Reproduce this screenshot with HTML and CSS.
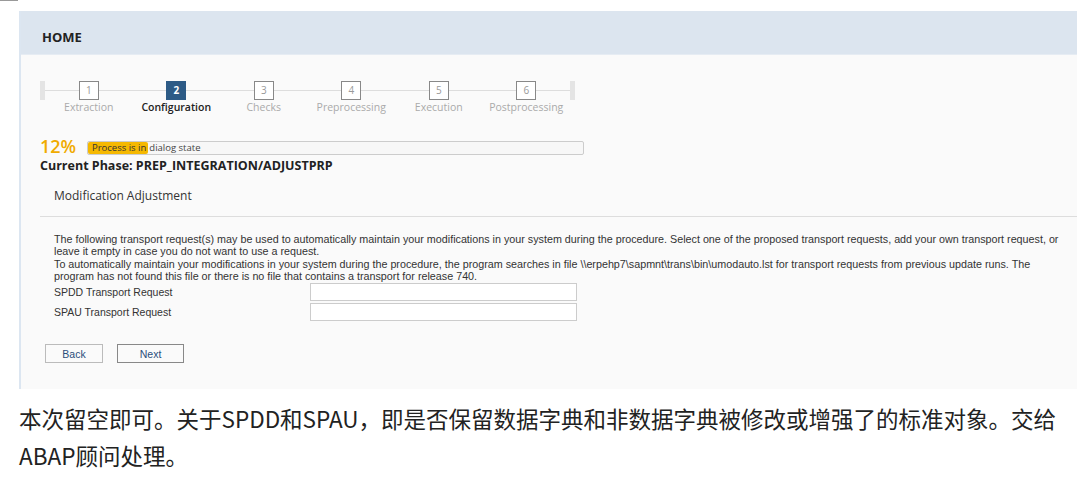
FILE: index.html
```html
<!DOCTYPE html>
<html lang="zh">
<head>
    <meta charset="UTF-8">
    <meta name="viewport" content="width=device-width, initial-scale=1.0">
    <title>SUM - Configuration</title>
    <link rel="stylesheet" href="styles.css">
</head>
<body>

    <div class="topmark"></div>

    <div class="panel">
        <div class="header">HOME</div>

        <div class="content">
            <div class="stepper">
                <div class="cap"></div>
                <div class="step"><span class="box">1</span><span class="label">Extraction</span></div>
                <div class="step current"><span class="box">2</span><span class="label">Configuration</span></div>
                <div class="step"><span class="box">3</span><span class="label">Checks</span></div>
                <div class="step"><span class="box">4</span><span class="label">Preprocessing</span></div>
                <div class="step"><span class="box">5</span><span class="label">Execution</span></div>
                <div class="step"><span class="box">6</span><span class="label">Postprocessing</span></div>
                <div class="cap"></div>
            </div>

            <div class="progress-row">
                <span class="percent">12%</span>
                <div class="progress">
                    <span class="fill">Process is in</span><span class="rest">dialog state</span>
                </div>
            </div>
            <div class="phase">Current Phase: PREP_INTEGRATION/ADJUSTPRP</div>

            <div class="section-title">Modification Adjustment</div>
            <div class="divider"></div>

            <div class="section">
                <p class="info">The following transport request(s) may be used to automatically maintain your modifications in your system during the procedure. Select one of the proposed transport requests, add your own transport request, or leave it empty in case you do not want to use a request.<br>To automatically maintain your modifications in your system during the procedure, the program searches in file \\erpehp7\sapmnt\trans\bin\umodauto.lst for transport requests from previous update runs. The program has not found this file or there is no file that contains a transport for release 740.</p>
                <div class="field">
                    <label>SPDD Transport Request</label>
                    <input type="text">
                </div>
                <div class="field">
                    <label>SPAU Transport Request</label>
                    <input type="text">
                </div>
            </div>

            <div class="buttons">
                <button class="btn">Back</button>
                <button class="btn next">Next</button>
            </div>
        </div>
    </div>

    <p class="note">本次留空即可。关于SPDD和SPAU，即是否保留数据字典和非数据字典被修改或增强了的标准对象。交给ABAP顾问处理。</p>

</body>
</html>
```

FILE: styles.css
```css
body {
    margin: 0;
    padding: 0;
    background: white;
    font-family: "Liberation Sans", Arial, sans-serif;
    color: #333;
}
.topmark {
    width: 18px;
    height: 1px;
    background: #999;
}
.panel {
    margin: 10px 0 0 19px;
    width: 1056px;
    border-left: 2px solid #dce6f1;
    background: #fafafa;
    height: 378px;
}
.header {
    height: 25px;
    padding: 18px 0 0 21px;
    line-height: 16px;
    background: #dce5ef;
    font-family: "Open Sans", sans-serif;
    font-weight: bold;
    font-size: 13px;
    color: #222;
    border-bottom: 1px solid #e6ecf3;
}
.content {
    padding: 26px 0 0 19px;
}
.stepper {
    display: flex;
    width: 537px;
    position: relative;
}
.stepper::before {
    content: "";
    position: absolute;
    left: 4px;
    right: 4px;
    top: 9px;
    height: 1px;
    background: #ddd;
}
.cap {
    width: 5px;
    height: 19px;
    background: #e4e4e4;
    position: relative;
}
.step {
    width: 87.5px;
    display: flex;
    flex-direction: column;
    align-items: center;
    position: relative;
}
.box {
    width: 18px;
    height: 17px;
    border: 1px solid #888;
    background: white;
    font-family: "Open Sans", sans-serif;
    font-size: 10px;
    line-height: 17px;
    text-align: center;
    color: #999;
}
.label {
    font-family: "Open Sans", sans-serif;
    font-size: 10.5px;
    color: #aaa;
    line-height: 14px;
    white-space: nowrap;
}
.current .box {
    background: #2d5b86;
    border-color: #2d5b86;
    color: white;
    font-weight: bold;
}
.current .label {
    color: #222;
    font-weight: 600;
}
.progress-row {
    display: flex;
    align-items: center;
    margin-top: 22px;
    height: 20px;
}
.percent {
    font-family: "Open Sans", sans-serif;
    font-size: 18px;
    font-weight: 600;
    color: #f0ab00;
    width: 47px;
}
.progress {
    width: 495px;
    height: 12px;
    border: 1px solid #ccc;
    border-radius: 2px;
    background: #f7f7f7;
    display: flex;
    align-items: center;
    font-family: "Open Sans", sans-serif;
    font-size: 9.5px;
    line-height: 12px;
    margin-top: 3px;
}
.fill {
    background: #f5b800;
    border-radius: 2px;
    padding: 0 2px 0 4px;
    color: #333;
    white-space: nowrap;
    height: 12px;
    margin-right: 1px;
}
.rest {
    color: #444;
}
.phase {
    font-family: "Open Sans", sans-serif;
    font-weight: bold;
    font-size: 12.5px;
    color: #222;
    line-height: 16px;
    margin-top: 2px;
}
.section-title {
    font-family: "Open Sans", sans-serif;
    font-size: 12px;
    color: #333;
    padding-left: 14px;
    margin-top: 14px;
    line-height: 16px;
}
.divider {
    height: 1px;
    background: #ddd;
    margin-top: 12px;
}
.section {
    padding-left: 14px;
}
.info {
    margin: 16px 0 0 0;
    font-size: 10.75px;
    line-height: 12.3px;
    color: #333;
    width: 1010px;
}
.field {
    display: flex;
    align-items: center;
    height: 20px;
}
.field label {
    width: 256px;
    font-size: 10.5px;
    color: #333;
}
.field input {
    width: 265px;
    height: 16px;
    border: 1px solid #ccc;
    background: white;
    padding: 0;
}
.buttons {
    display: flex;
    gap: 14px;
    margin-top: 22px;
    padding-left: 5px;
}
.btn {
    width: 58px;
    height: 19px;
    border: 1px solid #bbb;
    background: #fafafa;
    font-family: "Liberation Sans", Arial, sans-serif;
    font-size: 10.5px;
    color: #2a4e7a;
    padding: 0;
}
.next {
    width: 67px;
    border-color: #888;
}
.note {
    margin: 11px 0 0 19px;
    font-family: "Noto Sans CJK SC", sans-serif;
    font-size: 22.5px;
    line-height: 37px;
    color: #222;
    width: 1058px;
}
```
